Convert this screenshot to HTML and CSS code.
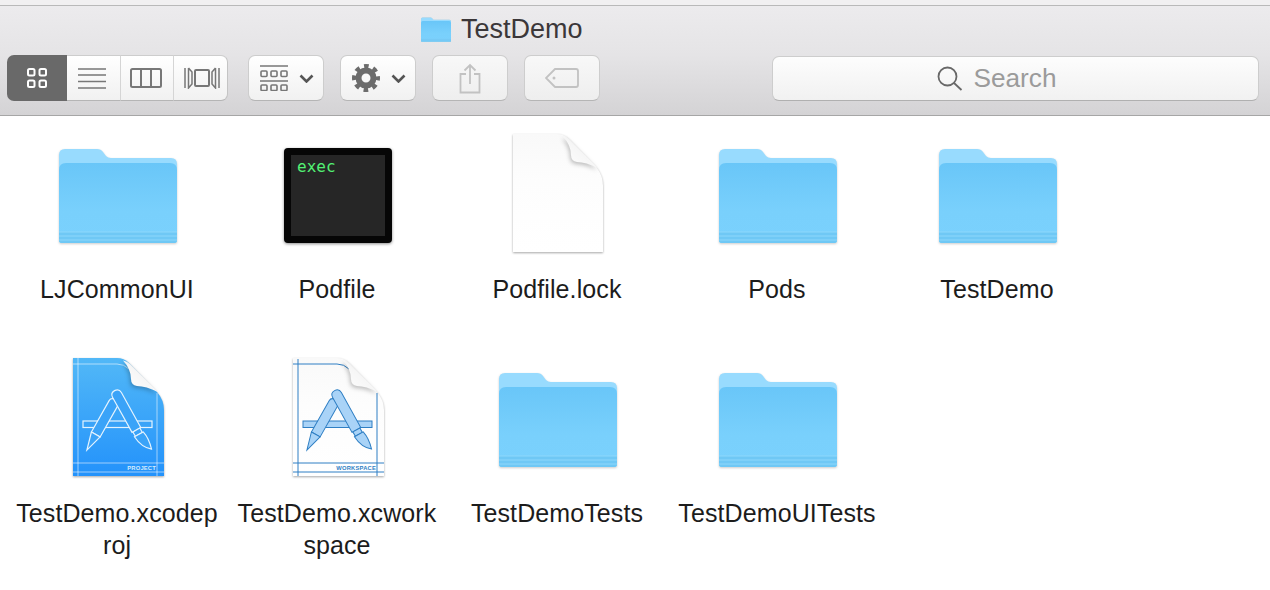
FILE: index.html
```html
<!DOCTYPE html>
<html lang="en">
<head>
  <meta charset="UTF-8">
  <title>TestDemo</title>
  <link rel="stylesheet" href="styles.css">
</head>
<body>
  <!-- shared icons -->
  <svg class="sprite" aria-hidden="true">
    <defs>
      <linearGradient id="folderFront" x1="0" y1="0" x2="0" y2="1">
        <stop offset="0" stop-color="#69c6f8"/>
        <stop offset="0.6" stop-color="#79d0fc"/>
        <stop offset="1" stop-color="#7ad1fd"/>
      </linearGradient>
      <linearGradient id="blueDoc" x1="0" y1="0" x2="0" y2="1">
        <stop offset="0" stop-color="#52b8f7"/>
        <stop offset="1" stop-color="#2392fb"/>
      </linearGradient>
      <linearGradient id="paper" x1="0" y1="0" x2="0" y2="1">
        <stop offset="0" stop-color="#f9f9f9"/>
        <stop offset="0.4" stop-color="#fdfdfd"/>
        <stop offset="1" stop-color="#ffffff"/>
      </linearGradient>
      <linearGradient id="curl" x1="1" y1="0" x2="0" y2="1">
        <stop offset="0.15" stop-color="#cfcfcf"/>
        <stop offset="0.5" stop-color="#f6f6f6"/>
        <stop offset="1" stop-color="#ffffff"/>
      </linearGradient>

      <symbol id="folder" viewBox="0 0 128 128">
        <g class="folder-shape">
          <path d="M6 26q0-6 6-6h32q4 0 6 3l3 4q2 2 5 2h60q6 0 6 6v76q0 3-3 3H9q-3 0-3-3z" fill="#98dbfe"/>
          <path d="M6 41q0-7 7-7h104q7 0 7 7v70q0 3-3 3H9q-3 0-3-3z" fill="url(#folderFront)"/>
          <path d="M6 103h118v8q0 3-3 3H9q-3 0-3-3z" fill="#6fc8f5"/>
          <path d="M6 103h118M6 107h118M6 111h118" stroke="#8ed7fb" stroke-width="1" fill="none"/>
        </g>
      </symbol>

      <g id="appMark">
        <rect x="30" y="68" width="69" height="6.500"/>
        <g transform="translate(60 51) rotate(29.500)">
          <path d="M-5-1q0-4 5-4t5 4v36h-10z"/>
          <path d="M-5 35h10L0 53z"/>
        </g>
        <g transform="translate(64 42) rotate(-29)">
          <path d="M-5 0q0-5 5-5t5 5v40h-10z"/>
          <path d="M-4 40h8v5h-8z"/>
          <path d="M-5 45h10q2 8-1 19q-8-6-9-19z"/>
        </g>
      </g>

      <path id="pageCurl" class="curl" d="M70 7.500Q74 8 77 11L105 39Q93 33 84 33Q78 32 78 26Q78 16 70 7.500z" fill="url(#curl)"/>
    </defs>
  </svg>

  <header class="toolbar">
    <div class="title-row">
      <svg class="title-folder" viewBox="6 18 118 98"><use href="#folder" x="0" y="0" width="128" height="128"/></svg>
      <span class="title">TestDemo</span>
    </div>
    <div class="controls">
      <div class="btn-group">
        <button class="seg seg-on">
          <svg width="20" height="20" viewBox="0 0 20 20" fill="none" stroke="#fff" stroke-width="2">
            <rect x="1" y="1" width="6.500" height="6.500" rx="1.500"/><rect x="12.500" y="1" width="6.500" height="6.500" rx="1.500"/>
            <rect x="1" y="12.500" width="6.500" height="6.500" rx="1.500"/><rect x="12.500" y="12.500" width="6.500" height="6.500" rx="1.500"/>
          </svg>
        </button>
        <button class="seg seg-list">
          <svg width="28" height="21" viewBox="0 0 28 21" stroke="#777" stroke-width="1.600">
            <path d="M0 1h28M0 7h28M0 13.500h28M0 20h28"/>
          </svg>
        </button>
        <button class="seg seg-cols">
          <svg width="32" height="20" viewBox="0 0 32 20" fill="none" stroke="#777" stroke-width="2">
            <rect x="1" y="1" width="30" height="18" rx="1.500"/><path d="M11 1v18M21 1v18"/>
          </svg>
        </button>
        <button class="seg seg-flow">
          <svg width="36" height="22" viewBox="0 0 36 22" fill="none" stroke="#777" stroke-width="2">
            <rect x="11" y="3" width="14" height="16" rx="1"/>
            <path d="M1 1v20M4.500 1v20L8 17V5L4.500 1M35 1v20M31.500 1v20L28 17V5l3.500-4" stroke-width="1.500"/>
          </svg>
        </button>
      </div>

      <button class="btn btn-sort">
        <svg width="28" height="26" viewBox="0 0 28 26" fill="none" stroke="#777" stroke-width="1.600">
          <path d="M0 1h28M0 16h28"/>
          <rect x="1" y="6" width="6" height="5.500" rx="1"/><rect x="11" y="6" width="6" height="5.500" rx="1"/><rect x="21" y="6" width="6" height="5.500" rx="1"/>
          <rect x="1" y="20" width="6" height="5.500" rx="1"/><rect x="11" y="20" width="6" height="5.500" rx="1"/><rect x="21" y="20" width="6" height="5.500" rx="1"/>
        </svg>
        <svg class="chev" width="15" height="9" viewBox="0 0 15 9"><path d="M1.500 1.500l6 6 6-6" fill="none" stroke="#555" stroke-width="2.600"/></svg>
      </button>

      <button class="btn btn-action">
        <svg width="28" height="28" viewBox="0 0 28 28" fill="none" stroke="#6c6c6c">
          <circle cx="14" cy="14" r="7.500" stroke-width="6"/>
          <circle cx="14" cy="14" r="11.500" stroke-width="5" stroke-dasharray="4.500 4.530" stroke-dashoffset="2.250"/>
        </svg>
        <svg class="chev" width="15" height="9" viewBox="0 0 15 9"><path d="M1.500 1.500l6 6 6-6" fill="none" stroke="#555" stroke-width="2.600"/></svg>
      </button>

      <button class="btn btn-off">
        <svg width="22" height="31" viewBox="0 0 22 31" fill="none" stroke="#c2c2c2" stroke-width="1.800">
          <path d="M7 11H1.500v18.500h19V11H15M11 21V2M5.500 7.500L11 2l5.500 5.500"/>
        </svg>
      </button>

      <button class="btn btn-off">
        <svg width="34" height="20" viewBox="0 0 34 20" fill="none" stroke="#c2c2c2" stroke-width="1.800">
          <path d="M10 1h21q2 0 2 2v14q0 2-2 2H10L1 10z"/>
          <circle cx="9" cy="10" r="1.500" fill="#c2c2c2" stroke="none"/>
        </svg>
      </button>

      <div class="search">
        <svg width="26" height="25" viewBox="0 0 26 25" fill="none" stroke="#686868" stroke-width="1.800">
          <circle cx="10.500" cy="10.500" r="9"/><path d="M17 17l7.500 7"/>
        </svg>
        <span>Search</span>
      </div>
    </div>
  </header>

  <main class="files">
    <div class="file">
      <svg class="icon" viewBox="0 0 128 128"><use href="#folder"/></svg>
      <div class="name">LJCommonUI</div>
    </div>

    <div class="file">
      <svg class="icon" viewBox="0 0 128 128">
        <rect class="term-frame" x="11" y="19" width="108" height="95" rx="4" fill="#060606"/>
        <rect x="18" y="26" width="94" height="81" fill="#262626"/>
        <text x="24" y="43" class="exec">exec</text>
      </svg>
      <div class="name">Podfile</div>
    </div>

    <div class="file">
      <svg class="icon" viewBox="0 0 128 128">
        <path class="doc" d="M20 5h44q7 0 12 5l28 29q6 8 6 18v66H20z" fill="url(#paper)"/>
        <use href="#pageCurl"/>
      </svg>
      <div class="name">Podfile.lock</div>
    </div>

    <div class="file">
      <svg class="icon" viewBox="0 0 128 128"><use href="#folder"/></svg>
      <div class="name">Pods</div>
    </div>

    <div class="file">
      <svg class="icon" viewBox="0 0 128 128"><use href="#folder"/></svg>
      <div class="name">TestDemo</div>
    </div>

    <div class="file">
      <svg class="icon" viewBox="0 0 128 128">
        <path class="doc" d="M20 5h44q7 0 12 5l28 29q7 8 7 18v66H20z" fill="url(#blueDoc)"/>
        <path d="M25 5v118M20 11h44q7 0 12 5M104 40v83M20 110h91M20 119h91" fill="none" stroke="#fff" stroke-opacity=".55" stroke-width="1"/>
        <use href="#appMark" fill="#3aa3f8" stroke="#e4f3fe" stroke-width="1.200"/>
        <text x="103" y="117" class="badge badge-light">PROJECT</text>
        <use href="#pageCurl"/>
      </svg>
      <div class="name">TestDemo.xcodeproj</div>
    </div>

    <div class="file">
      <svg class="icon" viewBox="0 0 128 128">
        <path class="doc" d="M20 5h44q7 0 12 5l28 29q7 8 7 18v66H20z" fill="url(#paper)"/>
        <path d="M25 6v117M20 11h44q7 0 12 5M104 40v83M20 110h91M20 119h91" fill="none" stroke="#2f7fc4" stroke-width="1"/>
        <use href="#appMark" fill="#a9d3f7" stroke="#2f7fc4" stroke-width="1"/>
        <text x="103" y="117" class="badge badge-dark">WORKSPACE</text>
        <use href="#pageCurl"/>
      </svg>
      <div class="name">TestDemo.xcworkspace</div>
    </div>

    <div class="file">
      <svg class="icon" viewBox="0 0 128 128"><use href="#folder"/></svg>
      <div class="name">TestDemoTests</div>
    </div>

    <div class="file">
      <svg class="icon" viewBox="0 0 128 128"><use href="#folder"/></svg>
      <div class="name">TestDemoUITests</div>
    </div>
  </main>
</body>
</html>
```

FILE: styles.css
```css
/* Basic styling */
* {
  margin: 0;
  padding: 0;
  box-sizing: border-box;
}

body {
  font-family: 'Liberation Sans', Arial, sans-serif;
  background: #ffffff;
  color: #1c1c1c;
}

.sprite {
  display: block;
  width: 0;
  height: 0;
}

/* Window toolbar */
.toolbar {
  height: 116px;
  background: #f1f0f1;
  padding-top: 5px;
}

.title-row {
  display: flex;
  align-items: center;
  gap: 10px;
  height: 50px;
  padding: 0 0 2px 421px;
  border-top: 1px solid #b9b9b9;
  background: linear-gradient(#ecebed, #e5e4e6);
}

.title-folder {
  width: 30px;
  height: 25px;
}

.title {
  font-size: 27px;
  color: #3b3739;
}

.controls {
  display: flex;
  align-items: flex-start;
  height: 61px;
  padding-left: 7px;
  background: linear-gradient(#e5e4e6, #d4d3d5);
  border-bottom: 1px solid #a6a6a6;
}

button {
  display: flex;
  align-items: center;
  justify-content: center;
  font: inherit;
  background: linear-gradient(#ffffff, #f1f1f1);
  border: 1px solid #cdcdcd;
  border-bottom-color: #b5b5b5;
}

/* View switcher */
.btn-group {
  display: flex;
  height: 46px;
  margin-right: 20px;
}

.seg {
  height: 46px;
  border-left: none;
  border-right: 1px solid #d5d5d5;
}

.seg-on {
  width: 60px;
  background: #696969;
  border: none;
  border-radius: 7px 0 0 7px;
}

.seg-list {
  width: 54px;
  padding-right: 3px;
}

.seg-cols {
  width: 53px;
  padding-right: 2px;
}

.seg-flow {
  width: 54px;
  padding-left: 2px;
  border-right: 1px solid #c4c4c4;
  border-radius: 0 7px 7px 0;
}

/* Toolbar buttons */
.btn {
  width: 76px;
  height: 46px;
  margin-right: 16px;
  border-radius: 7px;
}

.btn-sort, .btn-action {
  gap: 11px;
  padding-left: 2px;
}

.btn-off {
  background: linear-gradient(#f8f8f8, #eeeeee);
}

.search {
  display: flex;
  align-items: center;
  justify-content: center;
  gap: 11px;
  width: 487px;
  height: 45px;
  margin: 1px 0 0 156px;
  padding-right: 38px;
  font-size: 26.200px;
  color: #9b9b9b;
  background: linear-gradient(#fdfdfd, #f1f1f1);
  border: 1px solid #cdcdcd;
  border-bottom-color: #b0b0b0;
  border-radius: 7px;
}

/* File grid */
.files {
  display: grid;
  grid-template-columns: repeat(5, 220px);
  row-gap: 48px;
  align-items: start;
  padding: 13px 0 0 7px;
}

.file {
  display: flex;
  flex-direction: column;
  align-items: center;
}

.icon {
  display: block;
  width: 128px;
  height: 128px;
  overflow: visible;
}

.name {
  width: 206px;
  margin-top: 16px;
  font-size: 25px;
  line-height: 32px;
  letter-spacing: .1px;
  text-align: center;
  word-break: break-all;
}

/* Icon details */
.folder-shape {
  filter: drop-shadow(0 1px 1px rgba(0, 0, 0, .2));
}

.term-frame {
  filter: drop-shadow(0 1px 1.500px rgba(0, 0, 0, .45));
}

.doc {
  filter: drop-shadow(0 1px 1.200px rgba(0, 0, 0, .35));
}

.curl {
  filter: drop-shadow(-1px 2px 2px rgba(0, 0, 0, .25));
}

.exec {
  font-family: 'DejaVu Sans Mono', monospace;
  font-size: 16px;
  fill: #52f074;
}

.badge {
  font-size: 5.800px;
  font-weight: bold;
  letter-spacing: .2px;
  text-anchor: end;
}

.badge-light {
  fill: #d5ecfd;
}

.badge-dark {
  fill: #2f7fc4;
}
```
